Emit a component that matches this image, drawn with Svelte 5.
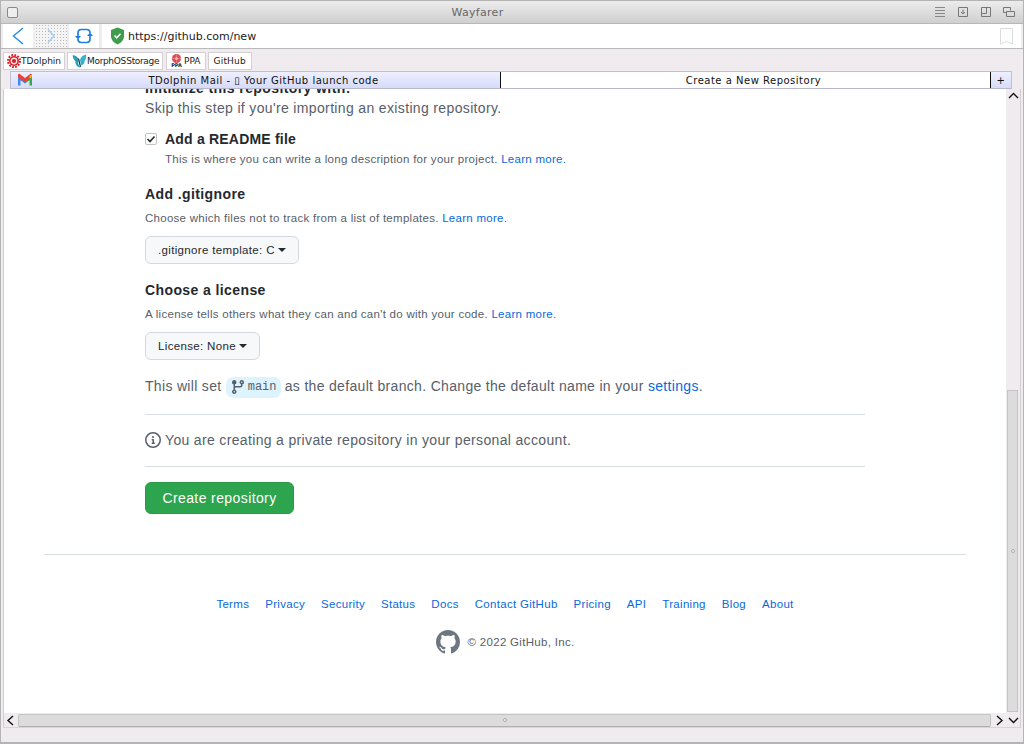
<script lang="ts">
  const footerLinks = ['Terms', 'Privacy', 'Security', 'Status', 'Docs', 'Contact GitHub', 'Pricing', 'API', 'Training', 'Blog', 'About'];
</script>

<div class="window">
  <header class="titlebar">
    <span class="close"></span>
    <span class="title">Wayfarer</span>
    <div class="wintools">
      <svg width="12" height="14" viewBox="0 0 12 14"><path d="M1 2.500h10M1 5.500h10M1 8.500h10M1 11.500h10" stroke="#888" fill="none"/></svg>
      <svg width="12" height="14" viewBox="0 0 12 14"><path d="M1.500 2.500h9v9h-9zM6 4.500v4M4 7l2 2 2-2" stroke="#777" fill="none"/></svg>
      <svg width="12" height="14" viewBox="0 0 12 14"><path d="M1.500 2.500h9v9h-9zM1.500 8.500h5v-6" stroke="#777" fill="none"/></svg>
      <svg class="lasttool" width="14" height="14" viewBox="0 0 14 14"><path d="M1.500 2.500h7v3M1.500 2.500v5h3M4.500 6.500h8v5h-8z" stroke="#777" fill="none"/></svg>
    </div>
  </header>

  <div class="toolbar">
    <button class="navbtn">
      <svg width="12" height="18" viewBox="0 0 12 18"><path d="M11 1L1.500 9l9.500 8" stroke="#2b8df0" stroke-width="1.500" fill="none"/></svg>
    </button>
    <button class="navbtn off">
      <svg width="8" height="14" viewBox="0 0 8 14"><path d="M1 0.500l6 6.500-6 6.500" stroke="#a8d0f6" stroke-width="1.500" fill="none"/></svg>
    </button>
    <button class="navbtn">
      <svg width="18" height="18" viewBox="0 0 18 18"><path d="M3 10V6Q3 2.500 6.500 2.500h5Q15 2.500 15 6M15 8v4q0 3.500-3.500 3.500h-5Q3 15.500 3 12" stroke="#1f7fe0" stroke-width="1.700" fill="none"/><path d="M0 9h6l-3 3.500zM12 9h6l-3-3.500z" fill="#1f7fe0"/></svg>
    </button>
    <div class="urlbar">
      <svg class="shield" width="15" height="18" viewBox="0 0 15 18"><path d="M7.500 0.500L14 3v6c0 4-3 7-6.500 8.500C4 16 1 13 1 9V3z" fill="#3e9d4c"/><path d="M4.500 8.500l2.200 2.300 3.800-4" stroke="#fff" stroke-width="1.500" fill="none"/></svg>
      <span class="url">https://github.com/new</span>
      <svg class="bookmark" width="13" height="17" viewBox="0 0 13 17"><path d="M0.500 0.500h12v15.500l-6-2.500-6 2.500z" fill="#fdfdfd" stroke="#dcdcdc"/></svg>
    </div>
  </div>

  <nav class="bookmarks">
    <span class="mark gear">
      <svg width="14" height="14" viewBox="0 0 14 14"><circle cx="7" cy="7" r="6" fill="none" stroke="#d8202a" stroke-width="2" stroke-dasharray="1.800 1.300"/><circle cx="7" cy="7" r="5" fill="#d8202a"/><circle cx="7" cy="7" r="3.400" fill="#fbe4e4"/><circle cx="7" cy="7" r="2.100" fill="#d8202a"/></svg>
      TDolphin
    </span>
    <span class="mark morph">
      <svg width="15" height="14" viewBox="0 0 15 14"><path d="M0.500 1.500C3 0.500 6 3 7 6L6 9 8 13.500C5 13 3 10 3.500 7.500 2 6 1 4 0.500 1.500z" fill="#2f9fb8"/><path d="M14 0.500C11 1 8.500 3 8 6l1 5.500C11.500 11 13 9 12.500 7 14 5.500 14.500 3 14 0.500z" fill="#38b3c9"/><path d="M6.500 4.500L8.500 13" stroke="#12394a" stroke-width="1.100"/></svg>
      <span>MorphOS Storage</span>
    </span>
    <span class="mark ppa">
      <span class="ppaicon">
        <svg width="11" height="9" viewBox="0 0 11 9"><circle cx="5.500" cy="4.500" r="4.500" fill="#dd4a50"/><circle cx="5.500" cy="4.500" r="1.500" fill="#f3c5c6"/><path d="M5.500 0v9M1 4.500h9" stroke="#f1a5a8" stroke-width=".5"/></svg>
        <b>PPA</b>
      </span>
      PPA
    </span>
    <span class="mark plain">GitHub</span>
  </nav>

  <div class="tabs">
    <div class="tab active">
      <svg class="gmail" width="16" height="13" viewBox="0 0 16 12"><path d="M1 12V2l7 5.200V10L3.500 6.700V12z" fill="#4285f4"/><path d="M15 12V2L8 7.200V10l4.500-3.300V12z" fill="#34a853"/><path d="M1 3.500V1.500Q1 0 2.500 0.300L8 4.500 13.500 0.300Q15 0 15 1.500V3.500L8 8.700z" fill="#ea4335"/><path d="M12.500 2.200L15 1v2.500l-2.500 1.800z" fill="#fbbc04"/></svg>
      <span>TDolphin Mail - ▯ Your GitHub launch code</span>
    </div>
    <div class="tab">Create a New Repository</div>
    <div class="tab add">+</div>
  </div>

  <div class="viewport">
    <main class="page">
      <div class="form">
        <h3 class="clipped">Initialize this repository with:</h3>
        <p class="lead">Skip this step if you're importing an existing repository.</p>

        <label class="check">
          <span class="box"><svg width="10" height="10" viewBox="0 0 10 10"><path d="M1.500 5l2.500 2.500 4.500-5" stroke="#24292f" stroke-width="1.600" fill="none"/></svg></span>
          <strong>Add a README file</strong>
        </label>
        <p class="note indent">This is where you can write a long description for your project. <a href="#a">Learn more.</a></p>

        <h3 class="gi">Add .gitignore</h3>
        <p class="note">Choose which files not to track from a list of templates. <a href="#a">Learn more.</a></p>
        <button class="select">.gitignore template: C <i class="caret"></i></button>

        <h3 class="lic">Choose a license</h3>
        <p class="note">A license tells others what they can and can't do with your code. <a href="#a">Learn more.</a></p>
        <button class="select">License: None <i class="caret"></i></button>

        <p class="branch">
          This will set
          <span class="pill">
            <svg width="16" height="16" viewBox="0 0 16 16"><path fill="#57606a" d="M11.750 2.500a.750.750 0 100 1.500.750.750 0 000-1.500zm-2.250.750a2.250 2.250 0 113 2.122V6A2.500 2.500 0 0110 8.500H6a1 1 0 00-1 1v1.128a2.251 2.251 0 11-1.500 0V5.372a2.250 2.250 0 111.500 0v1.836A2.492 2.492 0 016 7h4a1 1 0 001-1v-.628A2.250 2.250 0 019.500 3.250zM4.250 12a.750.750 0 100 1.500.750.750 0 000-1.500zM3.500 3.250a.750.750 0 111.500 0 .750.750 0 01-1.500 0z"/></svg>
            <code>main</code>
          </span>
          as the default branch. Change the default name in your <a href="#a">settings</a>.
        </p>

        <hr />
        <p class="info">
          <svg width="16" height="16" viewBox="0 0 16 16"><path fill="#57606a" d="M8 1.500a6.500 6.500 0 100 13 6.500 6.500 0 000-13zM0 8a8 8 0 1116 0A8 8 0 010 8zm6.500-.250A.750.750 0 017.250 7h1a.750.750 0 01.750.750v2.750h.250a.750.750 0 010 1.500h-2a.750.750 0 010-1.500h.250v-2h-.250a.750.750 0 01-.750-.750zM8 6a1 1 0 100-2 1 1 0 000 2z"/></svg>
          You are creating a private repository in your personal account.
        </p>
        <hr />
        <button class="create">Create repository</button>
      </div>

      <footer class="foot">
        <ul>
          {#each footerLinks as link}
            <li><a href="#a">{link}</a></li>
          {/each}
        </ul>
        <div class="copy">
          <svg width="24" height="24" viewBox="0 0 16 16"><path fill="#6e7781" d="M8 0C3.580 0 0 3.580 0 8c0 3.540 2.290 6.530 5.470 7.590.4.070.55-.17.55-.38 0-.19-.01-.82-.01-1.490-2.010.37-2.530-.49-2.690-.94-.09-.23-.48-.94-.82-1.130-.28-.15-.68-.52-.01-.53.63-.01 1.080.58 1.230.82.72 1.210 1.870.87 2.330.66.07-.52.28-.87.51-1.070-1.780-.2-3.640-.89-3.640-3.950 0-.87.31-1.590.82-2.150-.08-.2-.36-1.020.08-2.120 0 0 .67-.21 2.200.82.64-.18 1.320-.27 2-.27.68 0 1.360.09 2 .27 1.530-1.040 2.200-.82 2.200-.82.44 1.100.16 1.920.08 2.120.51.56.82 1.270.82 2.150 0 3.070-1.870 3.750-3.650 3.950.29.25.54.73.54 1.480 0 1.070-.01 1.930-.01 2.200 0 .21.15.46.55.38A8.013 8.013 0 0016 8c0-4.420-3.580-8-8-8z"/></svg>
          <span>© 2022 GitHub, Inc.</span>
        </div>
      </footer>
    </main>

    <div class="vscroll">
      <svg class="arrow" width="13" height="10" viewBox="0 0 13 10"><path d="M2 7l4.500-4.500L11 7" stroke="#111" stroke-width="1.400" fill="none"/></svg>
      <div class="vtrack">
        <div class="vthumb"><span class="grip"></span></div>
      </div>
    </div>
  </div>

  <div class="hscroll">
    <svg width="13" height="13" viewBox="0 0 13 13"><path d="M9 2L4 6.500 9 11" stroke="#111" stroke-width="1.400" fill="none"/></svg>
    <div class="hthumb"><span class="grip"></span></div>
    <svg class="right" width="13" height="13" viewBox="0 0 13 13"><path d="M4 2l5 4.500L4 11" stroke="#111" stroke-width="1.400" fill="none"/></svg>
    <svg width="13" height="10" viewBox="0 0 13 10"><path d="M2 3l4.500 4.500L11 3" stroke="#111" stroke-width="1.400" fill="none"/></svg>
  </div>
  <div class="status"></div>
</div>

<style>
  :global(body) { margin: 0; background: #efebef; }

  .window {
    width: 1024px;
    height: 744px;
    box-sizing: border-box;
    display: flex;
    flex-direction: column;
    background: #efebef;
    border: 1px solid #b4b4b4;
    border-bottom-width: 2px;
    font-family: "DejaVu Sans", sans-serif;
    overflow: hidden;
  }

  .titlebar {
    height: 23px;
    flex: none;
    display: flex;
    align-items: center;
    background: linear-gradient(#ececec, #cfcfcf);
    border-bottom: 1px solid #b8b8b8;
    box-sizing: border-box;
  }
  .close {
    flex: none;
    width: 9px;
    height: 9px;
    margin-left: 6px;
    background: #eee;
    border: 1px solid #8a8a8a;
    border-radius: 2px;
  }
  .title {
    width: 920px;
    text-align: center;
    margin-left: 3px;
    font-size: 11px;
    color: #666;
    letter-spacing: 0.3px;
  }
  .wintools {
    margin-left: auto;
    display: flex;
    gap: 11px;
    margin-right: 7px;
  }
  .lasttool { margin-left: -1px; }

  .toolbar {
    height: 25px;
    flex: none;
    display: flex;
    gap: 2px;
    padding: 0 2px;
    background: #efebef;
    border-bottom: 1px solid #b9b9b9;
    box-sizing: border-box;
  }
  .navbtn {
    flex: none;
    width: 30px;
    height: 24px;
    padding: 0;
    border: 0;
    background: #fff;
    display: flex;
    align-items: center;
    justify-content: center;
  }
  .navbtn.off {
    width: 32px;
    background-color: #f4f4f4;
    background-image: radial-gradient(#bbb 0.7px, transparent 0.8px);
    background-size: 3px 3px;
  }
  .urlbar {
    flex: 1;
    margin-left: 1px;
    height: 24px;
    background: #fff;
    display: flex;
    align-items: center;
  }
  .shield { margin-left: 8px; }
  .url { margin-left: 3px; padding-top: 1px; font-size: 11px; color: #222; }
  .bookmark { margin-left: auto; margin-right: 8px; }

  .bookmarks {
    height: 22px;
    flex: none;
    display: flex;
    align-items: center;
    gap: 2px;
    padding: 1px 0 0 2px;
    box-sizing: border-box;
  }
  .mark {
    height: 18px;
    box-sizing: border-box;
    display: flex;
    align-items: center;
    background: #fff;
    border: 1px solid #d4d0d4;
    font-size: 9px;
    color: #222;
    white-space: nowrap;
  }
  .mark.gear { padding: 0 3px 0 3px; }
  .mark.morph { padding: 0 3px 0 4px; letter-spacing: -0.35px; word-spacing: -2px; }
  .mark.ppa { margin-left: 1px; padding: 0 4px; gap: 1px; }
  .mark.plain { padding: 0 5px; letter-spacing: 0.2px; }
  .ppaicon {
    display: flex;
    flex-direction: column;
    align-items: center;
    line-height: 5px;
    margin-right: 1px;
  }
  .ppaicon b { font-size: 5px; letter-spacing: 0; }

  .tabs {
    height: 18px;
    flex: none;
    display: flex;
    margin-left: 9px;
    margin-right: 11px;
    font-size: 10px;
    color: #111;
    letter-spacing: 0.5px;
    border: 1px solid #c0c0d0;
    border-bottom-color: #b8b8cc;
    box-sizing: border-box;
    position: relative;
    z-index: 2;
  }
  .tab {
    flex: 1;
    display: flex;
    align-items: center;
    justify-content: center;
    padding-left: 16px;
    background: #fff;
    position: relative;
  }
  .tab.active {
    background: linear-gradient(#eef0ff, #d6dbf8);
    border-right: 1px solid #111;
  }
  .tab.add {
    flex: none;
    width: 20px;
    padding-left: 0;
    border-left: 1px solid #111;
    background: linear-gradient(#eef0ff, #d6dbf8);
  }
  .gmail { position: absolute; left: 6px; top: 1px; }

  .viewport {
    flex: 1;
    min-height: 0;
    display: flex;
    margin-left: 2px;
    margin-right: 2px;
  }
  .page {
    flex: 1;
    min-width: 0;
    background: #fff;
    overflow: hidden;
    font-family: "Liberation Sans", Arial, sans-serif;
    color: #24292f;
    border-left: 1px solid #d0d0d0;
  }
  .form {
    width: 720px;
    margin-left: 141px;
    margin-top: -11px;
    color: #57606a;
  }
  h3 {
    margin: 0;
    font-size: 14px;
    line-height: 20px;
    color: #24292f;
    letter-spacing: 0.4px;
  }
  .lead {
    margin: 0;
    font-size: 14px;
    line-height: 20px;
    letter-spacing: 0.35px;
  }
  .check {
    display: flex;
    align-items: center;
    margin-top: 11px;
    height: 20px;
  }
  .box {
    width: 10px;
    height: 10px;
    border: 1px solid #c8c0c2;
    border-radius: 2px;
    margin-right: 8px;
    display: flex;
    align-items: center;
    justify-content: center;
  }
  .check strong { font-size: 14px; color: #24292f; letter-spacing: 0.2px; }
  .note {
    margin: 0;
    font-size: 11.500px;
    line-height: 18px;
    letter-spacing: 0.275px;
  }
  .indent { margin-left: 20px; margin-top: 1px; }
  a { color: #0969da; text-decoration: none; }
  .gi { margin-top: 16px; }
  .lic { margin-top: 16px; }
  .gi + .note, .lic + .note { margin-top: 5px; }
  .select {
    display: flex;
    align-items: center;
    gap: 3px;
    margin-top: 9px;
    height: 28px;
    padding: 0 12px;
    border: 1px solid #d4d9e0;
    border-radius: 6px;
    background: #f6f8fa;
    font: 11.500px "Liberation Sans", Arial, sans-serif;
    color: #24292f;
    letter-spacing: 0.34px;
  }
  .caret {
    border: 4px solid transparent;
    border-top-color: #24292f;
    border-bottom-width: 0;
  }
  .branch {
    margin: 14px 0 0;
    font-size: 14px;
    line-height: 24px;
    letter-spacing: 0.32px;
  }
  .pill {
    display: inline-flex;
    align-items: center;
    gap: 2px;
    background: #ddf4ff;
    border-radius: 7px;
    padding: 0 4px;
    height: 21px;
    vertical-align: middle;
  }
  code { font: 12px "Liberation Mono", monospace; color: #57606a; letter-spacing: 0; }
  hr {
    border: 0;
    border-top: 1px solid #d8dee4;
    margin: 0;
  }
  .branch + hr { margin-top: 16px; }
  .info {
    margin: 0;
    height: 51px;
    padding-bottom: 2px;
    box-sizing: border-box;
    display: flex;
    align-items: center;
    gap: 4px;
    font-size: 14px;
    letter-spacing: 0.34px;
  }
  .create {
    display: block;
    margin-top: 15px;
    width: 149px;
    height: 32px;
    border: 1px solid #2a9a44;
    border-radius: 6px;
    background: #2da44e;
    color: #fff;
    font: 14px "Liberation Sans", Arial, sans-serif;
    letter-spacing: 0.4px;
  }

  .foot {
    margin: 40px 40px 0 40px;
    border-top: 1px solid #d8dee4;
  }
  .foot ul {
    list-style: none;
    margin: 40px 0 0;
    padding: 0;
    display: flex;
    justify-content: center;
    gap: 16px;
    font-size: 11.500px;
    line-height: 18px;
    letter-spacing: 0.3px;
  }
  .copy {
    display: flex;
    justify-content: center;
    align-items: center;
    gap: 8px;
    margin-top: 17px;
    font-size: 11.500px;
    color: #57606a;
    letter-spacing: 0.3px;
  }

  .vscroll {
    width: 14px;
    flex: none;
    display: flex;
    flex-direction: column;
    align-items: center;
    background: #efebef;
    border-right: 1px solid #d0d0d0;
  }
  .arrow { flex: none; margin-top: 2px; }
  .vtrack {
    flex: 1;
    width: 100%;
    display: flex;
    flex-direction: column;
    justify-content: flex-end;
  }
  .vthumb {
    height: 322px;
    width: 11px;
    margin: 0 0 1px 1px;
    background: #dcdcdc;
    border: 1px solid #c4c4c4;
    box-sizing: border-box;
    position: relative;
  }
  .hscroll {
    height: 15px;
    flex: none;
    display: flex;
    align-items: center;
    margin: 0 2px 0 2px;
    border-right: 1px solid #d0d0d0;
    border-left: 1px solid #d0d0d0;
    border-bottom: 1px solid #d8d4d8;
    box-sizing: border-box;
  }
  .hthumb {
    flex: 1;
    height: 11px;
    margin: 0 0 0 1px;
    background: #dcdcdc;
    border: 1px solid #c4c4c4;
    border-bottom-color: #b0b0b0;
    border-radius: 2px;
    position: relative;
  }
  .right { margin-left: 2px; margin-right: 1px; }
  .grip {
    position: absolute;
    left: 50%;
    top: 50%;
    width: 4px;
    height: 4px;
    margin: -2px;
    border-radius: 50%;
    background: #f6f6f6;
    border: 1px solid #aaa;
    box-sizing: border-box;
  }
  .status { height: 14px; flex: none; }
</style>
